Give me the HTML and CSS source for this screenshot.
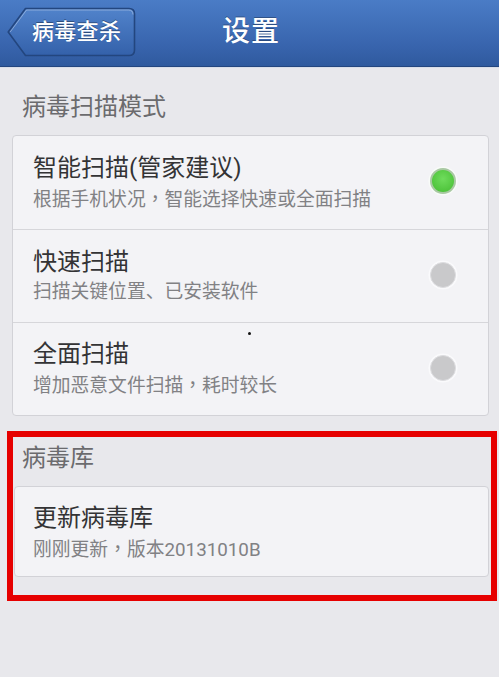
FILE: index.html
```html
<!DOCTYPE html>
<html lang="zh-CN">
<head>
<meta charset="utf-8">
<title>设置</title>
<link rel="stylesheet" href="styles.css">
</head>
<body>
<div class="page">
  <header class="topbar">
    <div class="back">
      <svg class="back-shape" viewBox="0 0 129 50" width="129" height="50" aria-hidden="true">
        <defs>
          <linearGradient id="bg" x1="0" y1="0" x2="0" y2="1">
            <stop offset="0" stop-color="#5183cb"/>
            <stop offset="1" stop-color="#3461aa"/>
          </linearGradient>
        </defs>
        <path d="M1.2,25 L18.5,1.5 H122 Q127.5,1.5 127.5,7 V43 Q127.5,48.5 122,48.5 H18.5 Z" fill="url(#bg)" stroke="#23467f" stroke-width="1.6" stroke-linejoin="round"/>
        <path d="M3.2,25 L19.5,3 H121.5 Q126,3 126,7.5" fill="none" stroke="rgba(255,255,255,0.35)" stroke-width="1"/>
      </svg>
      <span class="back-text">病毒查杀</span>
    </div>
    <h1 class="title">设置</h1>
    <div class="spacer"></div>
  </header>

  <div class="section-label">病毒扫描模式</div>
  <div class="card">
    <div class="row">
      <div class="row-text">
        <div class="row-title">智能扫描(管家建议)</div>
        <div class="row-sub">根据手机状况<span class="punct" lang="zh-Hant-TW">，</span>智能选择快速或全面扫描</div>
      </div>
      <span class="radio on"></span>
    </div>
    <div class="row">
      <div class="row-text">
        <div class="row-title">快速扫描</div>
        <div class="row-sub">扫描关键位置、已安装软件</div>
      </div>
      <span class="radio"></span>
    </div>
    <div class="row">
      <div class="row-text">
        <div class="row-title">全面扫描</div>
        <div class="row-sub">增加恶意文件扫描<span class="punct" lang="zh-Hant-TW">，</span>耗时较长</div>
      </div>
      <span class="radio"></span>
    </div>
  </div>

  <div class="highlight">
    <div class="section-label inner">病毒库</div>
    <div class="card card-db">
      <div class="row">
        <div class="row-text">
          <div class="row-title">更新病毒库</div>
          <div class="row-sub">刚刚更新<span class="punct" lang="zh-Hant-TW">，</span>版本20131010B</div>
        </div>
      </div>
    </div>
  </div>

  <span class="speck"></span>
</div>
</body>
</html>
```

FILE: styles.css
```css
* { box-sizing: border-box; }

html, body {
  margin: 0;
  padding: 0;
}

body {
  background: #e8e8ec;
  font-family: Roboto, "Noto Sans CJK SC", sans-serif;
}

.page {
  position: relative;
  width: 499px;
  height: 677px;
  overflow: hidden;
  background: #e8e8ec;
}

/* top bar */
.topbar {
  height: 67px;
  display: grid;
  grid-template-columns: 1fr auto 1fr;
  align-items: center;
  background: linear-gradient(#4a7cc6, #3864ad 70%, #2f5a9e);
  border-bottom: 1px solid #23467f;
  box-shadow: 0 1px 0 #d9dee8;
}

.back {
  display: grid;
  width: 129px;
  height: 50px;
  margin-left: 7px;
  margin-bottom: 2px;
}

.back-shape,
.back-text {
  grid-area: 1 / 1;
}

.back-text {
  align-self: center;
  padding-left: 25px;
  color: #ffffff;
  font-size: 22px;
  font-weight: 500;
  line-height: 30px;
  letter-spacing: 0.3px;
  text-shadow: 0 -1px 0 rgba(0, 0, 0, 0.35);
}

.title {
  margin: 0 0 2px 0;
  padding-left: 3px;
  color: #ffffff;
  font-size: 28px;
  font-weight: 500;
  line-height: 36px;
  letter-spacing: 1px;
  text-shadow: 0 -1px 0 rgba(0, 0, 0, 0.3);
}

/* section label */
.section-label {
  padding: 24px 0 12px 22px;
  height: 68px;
  color: #6b6b6e;
  font-size: 24px;
  line-height: 32px;
}

.section-label.inner {
  height: 49px;
  padding: 5px 0 12px 9px;
}

/* cards */
.card {
  margin: 0 10px 0 12px;
  background: #f3f3f6;
  border: 1px solid #d2d2d7;
  border-radius: 4px;
}

.row {
  height: 93px;
  display: flex;
  align-items: center;
  padding: 0 32px 0 20px;
}

.row + .row {
  height: 93px;
  border-top: 1px solid #d6d6da;
}

.row-text {
  flex: 1;
  padding-bottom: 1px;
}

.row-title {
  color: #333335;
  font-size: 24px;
  line-height: 30px;
}

.row-sub {
  margin-top: 3px;
  color: #818184;
  font-size: 18.8px;
  line-height: 24px;
}

.punct {
  font-family: "Noto Sans CJK TC", sans-serif;
}

.radio {
  width: 26px;
  height: 26px;
  border-radius: 50%;
  background: #c9c9cb;
  border: 1px solid #dddde0;
  box-shadow: 0 0 0 1.5px #fafafc;
  margin-bottom: 3px;
}

.radio.on {
  background: radial-gradient(circle at 50% 40%, #6fdc5c, #4fc43c 75%);
  border: 2px solid #a9c9a3;
  box-shadow: 0 0 0 1.5px #f8fbf8;
}

/* red highlight box */
.highlight {
  margin: 15px 2px 0 7px;
  height: 170px;
  border: 6px solid #e60000;
  background: #e8e8ec;
}

.card-db {
  margin: 0 2px 0 1px;
  height: 91px;
}

.card-db .row {
  height: 89px;
  padding: 0 20px 0 18px;
}

.card-db .row-text {
  padding-bottom: 0;
  padding-top: 1px;
}

/* tiny speck present in the screenshot */
.speck {
  position: absolute;
  left: 248px;
  top: 332px;
  width: 3px;
  height: 3px;
  border-radius: 50%;
  background: #111;
}
```
